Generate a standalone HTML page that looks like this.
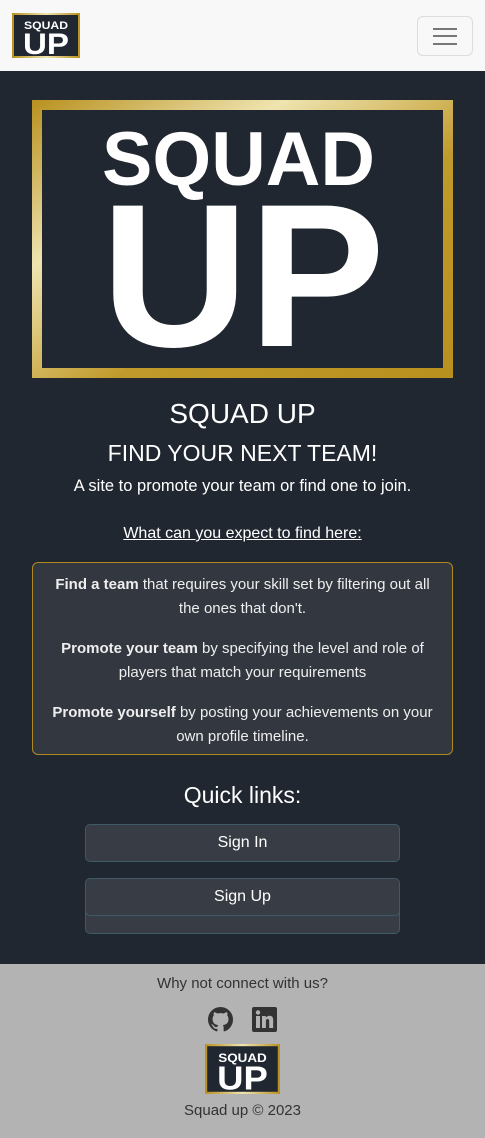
<!DOCTYPE html>
<html><head><meta charset="utf-8">
<style>
*{box-sizing:border-box;margin:0;padding:0}
body{width:485px;height:1138px;overflow:hidden;font-family:"Liberation Sans",sans-serif;background:#212731;color:#fff}
.nav{height:71px;background:#f8f8f8;position:relative}
.logo-s{position:absolute;left:12px;top:13px;width:68px;height:45px}
.tog{position:absolute;left:417px;top:16px;width:56px;height:40px;border:1px solid #ddd;border-radius:6px}
.tog i{position:absolute;left:15px;width:24px;height:2px;background:#777}
main{position:relative;height:893px}
.hero{position:absolute;left:32px;top:29px;width:421px;height:278px}
h1{position:absolute;top:327px;width:100%;text-align:center;font-size:28px;font-weight:normal}
h2{position:absolute;top:369px;width:100%;text-align:center;font-size:23px;font-weight:normal}
.sub{position:absolute;top:406px;width:100%;text-align:center;font-size:16.5px}
.what{position:absolute;top:454px;width:100%;text-align:center;font-size:16px;text-decoration:underline}
.box{position:absolute;left:32px;top:491px;width:421px;height:193px;border:1px solid #b08a1c;border-radius:6px;background:#323740;text-align:center;font-size:15px;line-height:24px;padding:10px 14px;color:#eee}
.box p{margin-bottom:16px}
.ql{position:absolute;top:711px;width:100%;text-align:center;font-size:23px}
.btn{position:absolute;left:85px;width:315px;height:38px;border:1px solid #3e5a66;border-radius:5px;background:#383c45;text-align:center;font-size:16px;line-height:36px}
footer{background:#b3b3b3;height:174px;position:relative;color:#333;text-align:center}
</style></head><body>
<div class="nav">
<svg class="logo-s" viewBox="0 0 68 45"><defs><linearGradient id="g1" x1="0" x2="1"><stop offset="0" stop-color="#b8901e"/><stop offset=".5" stop-color="#efe4b0"/><stop offset="1" stop-color="#b8901e"/></linearGradient></defs><rect width="68" height="45" fill="url(#g1)"/><rect x="2" y="2" width="64" height="41" fill="#212731"/><text x="34" y="16" text-anchor="middle" font-family="Liberation Sans" font-weight="bold" font-size="11" fill="#fff" textLength="44" lengthAdjust="spacingAndGlyphs">SQUAD</text><text x="34" y="41" text-anchor="middle" font-family="Liberation Sans" font-weight="bold" font-size="30" fill="#fff" textLength="46" lengthAdjust="spacingAndGlyphs">UP</text></svg>
<div class="tog"><i style="top:11px"></i><i style="top:18px"></i><i style="top:26px"></i></div>
</div>
<main>
<svg class="hero" viewBox="0 0 421 278"><defs><linearGradient id="g2" x1="0" x2="1" y1="0" y2="1"><stop offset="0" stop-color="#b8901e"/><stop offset=".3" stop-color="#efe4b0"/><stop offset=".6" stop-color="#c09a2a"/><stop offset="1" stop-color="#b8901e"/></linearGradient></defs><rect width="421" height="278" fill="url(#g2)"/><rect x="10" y="10" width="401" height="258" fill="#212731"/><text x="70" y="85" font-family="Liberation Sans" font-weight="bold" font-size="76" fill="#fff" textLength="273" lengthAdjust="spacingAndGlyphs">SQUAD</text><text x="69" y="246" font-family="Liberation Sans" font-weight="bold" font-size="204" fill="#fff" textLength="284" lengthAdjust="spacingAndGlyphs">UP</text></svg>
<h1>SQUAD UP</h1>
<h2>FIND YOUR NEXT TEAM!</h2>
<div class="sub">A site to promote your team or find one to join.</div>
<div class="what">What can you expect to find here:</div>
<div class="box"><p><b>Find a team</b> that requires your skill set by filtering out all the ones that don't.</p><p><b>Promote your team</b> by specifying the level and role of players that match your requirements</p><p><b>Promote yourself</b> by posting your achievements on your own profile timeline.</p></div>
<div class="ql">Quick links:</div>
<div class="btn" style="top:753px">Sign In</div>
<div class="btn" style="top:825px;height:38px;line-height:22px;overflow:hidden;color:#ddd"><span style="position:relative;top:-6px">Sign Up</span></div>
<div class="btn" style="top:807px;height:38px">Sign Up</div>
</main>
<footer>
<div style="padding-top:11px;font-size:15px">Why not connect with us?</div>
<svg style="position:absolute;left:208px;top:43px" width="25" height="25" viewBox="0 0 16 16"><path fill="#333" d="M8 0C3.58 0 0 3.58 0 8c0 3.540 2.29 6.53 5.47 7.59.4.07.55-.17.55-.38v-1.33c-2.23.48-2.7-1.07-2.7-1.070-.36-.92-.89-1.17-.89-1.17-.73-.5.06-.49.06-.49.8.06 1.23.83 1.23.83.72 1.22 1.87.87 2.33.66.07-.52.28-.87.51-1.07-1.78-.2-3.64-.89-3.64-3.95 0-.87.31-1.59.82-2.15-.08-.2-.36-1.02.08-2.12 0 0 .67-.21 2.2.82a7.6 7.6 0 0 1 4 0c1.53-1.04 2.2-.82 2.2-.82.44 1.1.16 1.92.08 2.12.51.56.82 1.27.82 2.15 0 3.07-1.87 3.75-3.65 3.95.29.25.54.73.54 1.48v2.19c0 .21.15.46.55.38A8 8 0 0 0 16 8c0-4.42-3.58-8-8-8z"/></svg>
<svg style="position:absolute;left:252px;top:43px" width="25" height="25" viewBox="0 0 25 25"><rect width="25" height="25" rx="2" fill="#333"/><rect x="4" y="9" width="4" height="12" fill="#b3b3b3"/><circle cx="6" cy="5.5" r="2.2" fill="#b3b3b3"/><path d="M10 9h3.8v1.8c.6-1.1 2-2 3.8-2 3 0 3.6 2 3.6 4.6V21h-4v-6.6c0-1.4-.3-2.4-1.6-2.4s-1.7 1-1.7 2.4V21H10z" fill="#b3b3b3"/></svg>
<svg style="position:absolute;left:205px;top:80px" width="75" height="50" viewBox="0 0 68 45" preserveAspectRatio="none"><rect width="68" height="45" fill="url(#g1)"/><rect x="2" y="2" width="64" height="41" fill="#212731"/><text x="34" y="16" text-anchor="middle" font-family="Liberation Sans" font-weight="bold" font-size="11" fill="#fff" textLength="44" lengthAdjust="spacingAndGlyphs">SQUAD</text><text x="34" y="41" text-anchor="middle" font-family="Liberation Sans" font-weight="bold" font-size="30" fill="#fff" textLength="46" lengthAdjust="spacingAndGlyphs">UP</text></svg>
<div style="position:absolute;top:138px;width:100%;font-size:15px">Squad up © 2023</div>
</footer>
</body></html>
